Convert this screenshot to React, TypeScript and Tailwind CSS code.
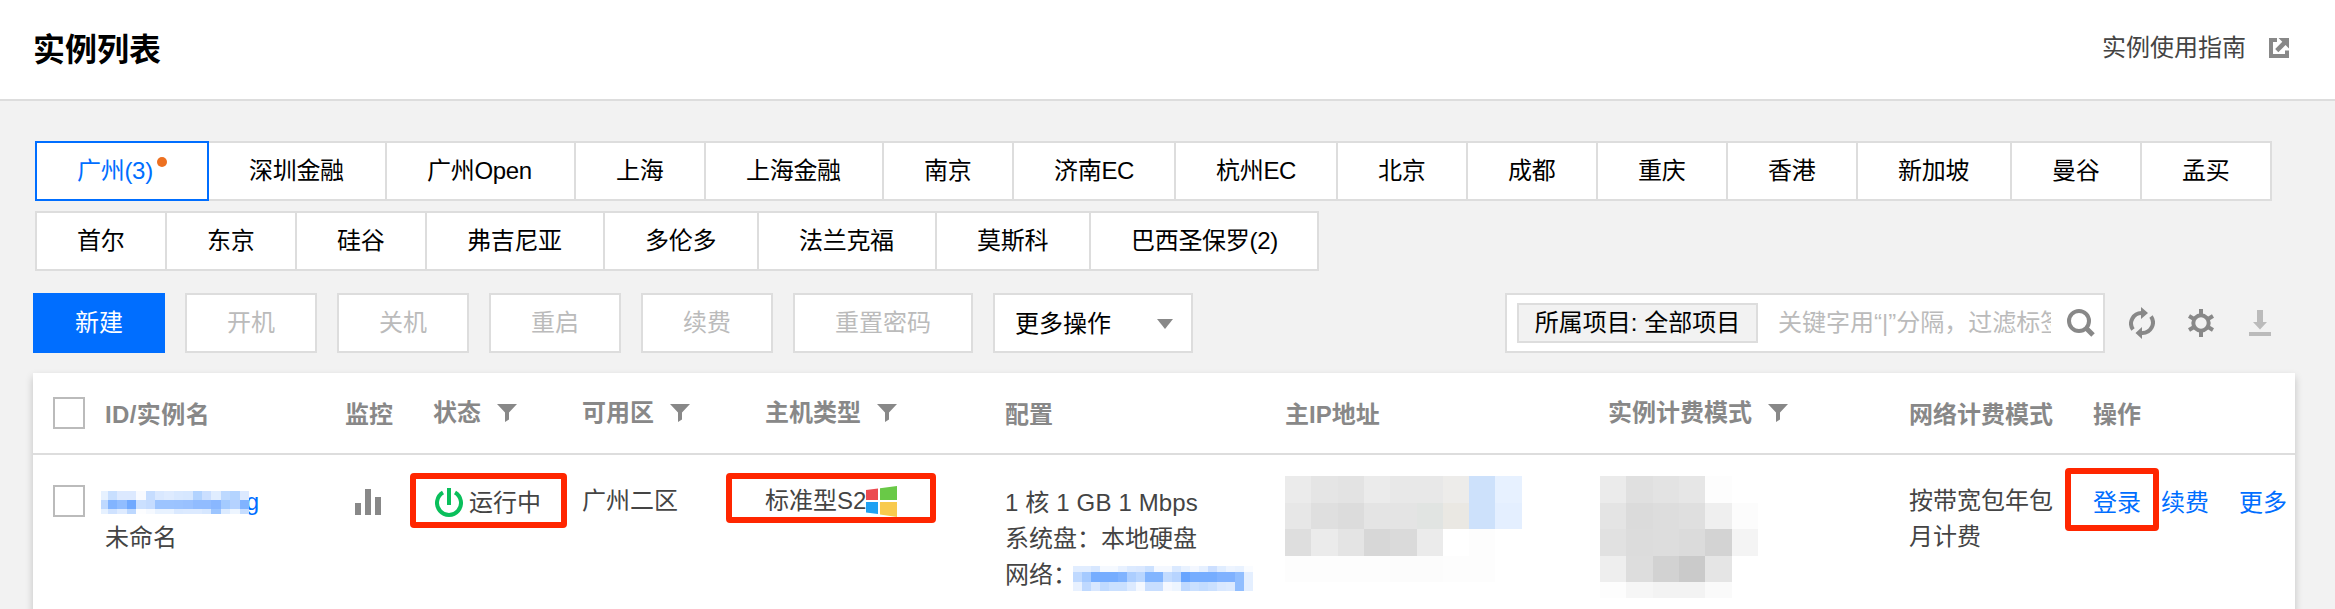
import React from 'react';

type Tab = { label: string; w: string; active?: boolean };

const firstRow: Tab[] = [
  { label: '广州(3)', w: 'w-[174px]', active: true },
  { label: '深圳金融', w: 'w-[180px]' },
  { label: '广州Open', w: 'w-[191px]' },
  { label: '上海', w: 'w-[132px]' },
  { label: '上海金融', w: 'w-[180px]' },
  { label: '南京', w: 'w-[132px]' },
  { label: '济南EC', w: 'w-[164px]' },
  { label: '杭州EC', w: 'w-[164px]' },
  { label: '北京', w: 'w-[132px]' },
  { label: '成都', w: 'w-[132px]' },
  { label: '重庆', w: 'w-[132px]' },
  { label: '香港', w: 'w-[132px]' },
  { label: '新加坡', w: 'w-[156px]' },
  { label: '曼谷', w: 'w-[132px]' },
  { label: '孟买', w: 'w-[132px]' },
];

const secondRow: Tab[] = [
  { label: '首尔', w: 'w-[132px]' },
  { label: '东京', w: 'w-[132px]' },
  { label: '硅谷', w: 'w-[132px]' },
  { label: '弗吉尼亚', w: 'w-[180px]' },
  { label: '多伦多', w: 'w-[156px]' },
  { label: '法兰克福', w: 'w-[180px]' },
  { label: '莫斯科', w: 'w-[156px]' },
  { label: '巴西圣保罗(2)', w: 'w-[230px]' },
];

function Tabs({ items }: { items: Tab[] }) {
  return (
    <div className="flex pl-0.5">
      {items.map((t) => (
        <div
          key={t.label}
          className={`relative -mr-0.5 flex h-[60px] shrink-0 items-center border-2 pl-10 tracking-[-0.3px] whitespace-nowrap ${t.w} ${
            t.active ? 'z-10 border-[#006eff] bg-white text-[#006eff]' : 'border-[#ddd] bg-white text-black'
          }`}
        >
          {t.label}
          {t.active && <span className="absolute top-[14px] right-[40px] h-[10px] w-[10px] rounded-full bg-[#ed7020]" />}
        </div>
      ))}
    </div>
  );
}

function Disabled({ label, w = 'w-[132px]' }: { label: string; w?: string }) {
  return (
    <div className={`flex h-[60px] items-center justify-center border-2 border-[#ddd] bg-white text-[#bbb] ${w}`}>
      {label}
    </div>
  );
}

function Filter() {
  return (
    <svg width="20" height="18" viewBox="0 0 20 18" className="ml-4">
      <path d="M0 0H20L12 8.5V15.5L8 18V8.5Z" fill="#888" />
    </svg>
  );
}

function Head({ label, filter }: { label: string; filter?: boolean }) {
  return (
    <div className={`flex h-9 items-center font-bold whitespace-nowrap text-[#888] ${filter ? 'mt-[22px]' : 'mt-6'}`}>
      {label}
      {filter && <Filter />}
    </div>
  );
}

function Checkbox({ className }: { className: string }) {
  return <div className={`h-8 w-8 border-2 border-[#bbb] bg-white ${className}`} />;
}

function Mosaic({ x, y, colors }: { x: number[]; y: number[]; colors: string[][] }) {
  return (
    <svg width={x[x.length - 1]} height={y[y.length - 1]} shapeRendering="crispEdges" className="block">
      {colors.map((row, r) =>
        row.map((c, i) => (
          <rect key={`${r}-${i}`} x={x[i]} y={y[r]} width={x[i + 1] - x[i]} height={y[r + 1] - y[r]} fill={c} />
        )),
      )}
    </svg>
  );
}

const steps = (start: number, size: number, n: number) => Array.from({ length: n + 1 }, (_, i) => start + size * i);

const idColors = [
  ['#e6f1ff', '#c8dfff', '#dce9ff', '#dce9ff', '#f8faff', '#c6ddff', '#d9e8ff', '#deebff', '#d8e8ff', '#d6e7ff', '#b2d3ff', '#cbdfff', '#e0edff', '#bdd9ff', '#b4d4ff', '#dce9ff'],
  ['#bfd9ff', '#82b4ff', '#91bdff', '#70a9ff', '#cbe0ff', '#c5dcff', '#9cc4ff', '#9cc4ff', '#9bc3ff', '#99c1ff', '#91bcff', '#91bcff', '#89b7ff', '#a4cbff', '#b5d2ff', '#80b3ff'],
  ['#e6f1ff', '#cfe2ff', '#deebff', '#bdd8ff', '#fcfdff', '#f5f9ff', '#e8f2ff', '#e8f2ff', '#dae9ff', '#dceaff', '#dceaff', '#d6e7ff', '#9cc5ff', '#dcebff', '#edf5ff', '#c6ddff'],
];

const netColors = [
  ['#e1edff', '#e1edff', '#d7e7ff', '#f5f9ff', '#f5f9ff', '#e8f1ff', '#dceaff', '#dae8ff', '#cce1ff', '#f4f8ff', '#f4f8ff', '#dae9ff', '#e9f2ff', '#f3f7ff', '#e6f0ff', '#ccdfff', '#e0edff', '#edf4ff', '#e9f2ff', '#fafcff'],
  ['#bfd9ff', '#a5caff', '#76adff', '#76adff', '#76adff', '#80b3ff', '#acceff', '#b9d6ff', '#82b5ff', '#82b5ff', '#c2dbff', '#b7d4ff', '#68a5ff', '#76adff', '#76adff', '#76adff', '#80b2ff', '#80b2ff', '#91beff', '#e4efff'],
  ['#e8f1ff', '#bfd9ff', '#d8e7ff', '#c0daff', '#cae0ff', '#cae0ff', '#dceaff', '#f4f8ff', '#c8deff', '#c8deff', '#f5f8ff', '#edf5ff', '#bfd9ff', '#cae0ff', '#c3dcff', '#cae0ff', '#d9e8ff', '#dceaff', '#91beff', '#e4efff'],
];

const ipColors = [
  ['#ebebeb', '#e5e5e5', '#e3e3e3', '#ebebeb', '#e8e8e8', '#e8e8e8', '#edecea', '#cde1fb', '#e7f1ff'],
  ['#e7e7e7', '#dfdfdf', '#dcdcdc', '#e4e4e4', '#e4e4e4', '#e1e4e2', '#eae8e3', '#cde1fb', '#e4efff'],
  ['#dedede', '#ebebeb', '#e4e4e4', '#d7d7d7', '#dadada', '#ebebeb', '#ffffff', '#fdfdfd', '#ffffff'],
  ['#fdfdfd', '#fdfdfd', '#fdfdfd', '#fdfdfd', '#fcfcfc', '#fcfcfc', '#fdfdfd', '#fdfdfd', '#ffffff'],
];

const feeColors = [
  ['#ebebeb', '#e0e0e0', '#e3e3e3', '#e6e6e6', '#fdfdfd', '#ffffff'],
  ['#e4e4e4', '#dbdbdb', '#dddddd', '#dfdfdf', '#efefef', '#fcfcfc'],
  ['#e1e1e1', '#dcdcdc', '#dddddd', '#dbdbdb', '#d3d3d3', '#f4f4f4'],
  ['#eeeeee', '#dddddd', '#d2d2d2', '#cacaca', '#e5e5e5', '#ffffff'],
  ['#fdfdfd', '#f6f6f6', '#f3f3f3', '#f3f3f3', '#fafafa', '#ffffff'],
];

function RedBox({ className }: { className: string }) {
  return <div className={`pointer-events-none absolute rounded-[4px] border-[6px] border-[#ff2600] ${className}`} />;
}

const columns = 'grid grid-cols-[52px_240px_88px_149px_183px_240px_280px_323px_301px_184px_202px] pl-5';

export default function App() {
  return (
    <div className="h-[609px] w-[2335px] overflow-hidden bg-[#f2f2f2] font-['Liberation_Sans','Noto_Sans_CJK_SC',sans-serif] text-[24px] leading-9 text-[#444]">
      <header className="flex h-[101px] items-center justify-between border-b-2 border-[#ddd] bg-white pr-[46px] pl-[33px]">
        <h1 className="text-[32px] font-bold text-black">实例列表</h1>
        <div className="flex items-center pb-[3px]">
          <span>实例使用指南</span>
          <svg width="20" height="20" viewBox="0 0 20 20" className="ml-[23px]">
            <path d="M8 0H0V20H20V12.5H16V16H4V4H8Z" fill="#888" />
            <path d="M9.5 0H20V10.5L16.6 7.1L9.3 14.2L6.2 11.1L13.3 3.8Z" fill="#888" />
          </svg>
        </div>
      </header>

      <main className="pt-10 pr-10 pl-[33px]">
        <div className="flex flex-col gap-[10px]">
          <Tabs items={firstRow} />
          <Tabs items={secondRow} />
        </div>

        <div className="mt-[22px] flex h-[60px] items-center justify-between">
          <div className="flex gap-5">
            <div className="flex h-[60px] w-[132px] items-center justify-center bg-[#006eff] text-white">新建</div>
            <Disabled label="开机" />
            <Disabled label="关机" />
            <Disabled label="重启" />
            <Disabled label="续费" />
            <Disabled label="重置密码" w="w-[180px]" />
            <div className="flex h-[60px] w-[200px] items-center justify-between border-2 border-[#ddd] bg-white pt-0.5 pr-[18px] pl-5 text-black">
              更多操作
              <svg width="16" height="10" viewBox="0 0 16 10">
                <path d="M0 0H16L8 10Z" fill="#888" />
              </svg>
            </div>
          </div>

          <div className="flex items-center pr-6">
            <div className="flex h-[60px] w-[600px] items-center border-2 border-[#ddd] bg-white pl-[10px]">
              <div className="flex h-10 w-[241px] shrink-0 items-center justify-center border-2 border-[#ddd] bg-[#f2f2f2] whitespace-nowrap text-black">
                所属项目: 全部项目
              </div>
              <div className="ml-5 w-[273px] shrink-0 overflow-hidden whitespace-nowrap text-[#bbb]">
                关键字用“|”分隔，过滤标签
              </div>
              <svg width="28" height="28" viewBox="0 0 28 28" fill="none" stroke="#888" className="ml-4">
                <circle cx="12" cy="12" r="10" strokeWidth="4" />
                <path d="M19 19L26 26" strokeWidth="5" />
              </svg>
            </div>
            <svg width="26" height="32" viewBox="0 0 26 32" fill="none" stroke="#888" strokeWidth="4" className="ml-6">
              <path d="M4 22.500A10.5 10.5 0 0 1 13 6" />
              <path d="M22 9.5A10.5 10.5 0 0 1 13 26" />
              <path d="M12 0L19 6L12 12ZM13 20V32L6.500 26Z" fill="#888" stroke="none" />
            </svg>
            <svg width="26" height="28" viewBox="0 0 26 28" fill="none" stroke="#888" strokeWidth="4" className="ml-[33px]">
              <circle cx="13" cy="14" r="7.700" />
              <path d="M13 0V6M13 22V28M1 7L6 10M20 18L25 21M25 7L20 10M6 18L1 21" />
            </svg>
            <svg width="22" height="26" viewBox="0 0 22 26" fill="#bbb" className="ml-[35px]">
              <path d="M8 0H14V12H18L11 19.500L4 12H8ZM0 22H22V26H0Z" />
            </svg>
          </div>
        </div>

        <section className="mt-5 h-[250px] bg-white shadow-[0_4px_8px_rgba(0,0,0,0.2)]">
          <div className={`${columns} h-[82px] border-b-2 border-[#ddd]`}>
            <Checkbox className="mt-6" />
            <div className="tracking-[0.4px]">
              <Head label="ID/实例名" />
            </div>
            <Head label="监控" />
            <Head label="状态" filter />
            <Head label="可用区" filter />
            <Head label="主机类型" filter />
            <Head label="配置" />
            <Head label="主IP地址" />
            <Head label="实例计费模式" filter />
            <Head label="网络计费模式" />
            <Head label="操作" />
          </div>

          <div className={`${columns} h-[168px]`}>
            <Checkbox className="mt-[30px]" />

            <div className="pt-[29px]">
              <div className="relative h-9 text-[#006eff]">
                <span className="flex w-[154px] justify-end">g</span>
                <div className="absolute top-[7px] -left-1">
                  <Mosaic x={[0, ...steps(7, 9.4, 15)]} y={[0, 9, 18, 23]} colors={idColors} />
                </div>
              </div>
              <div>未命名</div>
            </div>

            <svg width="26" height="26" viewBox="0 0 26 26" fill="#888" className="mt-[34px] ml-[10px]">
              <path d="M0 14H6V26H0ZM10 0H16V26H10ZM20 8H26V26H20Z" />
            </svg>

            <div className="relative mt-[30px] flex h-9 items-center self-start pl-0.5">
              <svg width="28" height="30" viewBox="0 0 28 30" fill="none" stroke="#0abf5b" strokeWidth="4">
                <path d="M8 4.500A12 12 0 1 0 20 4.500" />
                <path d="M14 0V17" />
              </svg>
              <span className="ml-1.5">运行中</span>
              <RedBox className="-top-3 -left-[23px] h-[55px] w-[157px]" />
            </div>

            <div className="pt-7">广州二区</div>

            <div className="relative mt-7 flex h-9 items-center">
              <span>标准型S2</span>
              <svg width="31" height="31" viewBox="0 0 31 31">
                <path d="M0 4L12 2.500V14H0Z" fill="#ec4a50" />
                <path d="M14 2.200L31 0V14H14Z" fill="#69c947" />
                <path d="M0 16H12V28L0 26.500Z" fill="#1ea1f3" />
                <path d="M14 16H31V31L14 28.500Z" fill="#f8ca4d" />
              </svg>
              <RedBox className="-top-[10px] -left-[39px] h-[50px] w-[210px]" />
            </div>

            <div className="pt-[30px] whitespace-nowrap">
              <div className="tracking-[0.15px]">1 核 1 GB 1 Mbps</div>
              <div>系统盘：本地硬盘</div>
              <div className="flex">
                网络：
                <div className="-ml-1 pt-[9px]">
                  <Mosaic x={steps(0, 9, 20)} y={[0, 6, 16, 25]} colors={netColors} />
                </div>
              </div>
            </div>

            <div className="pt-[21px]">
              <Mosaic x={steps(0, 26.3, 9)} y={[0, 27, 53, 80, 106]} colors={ipColors} />
            </div>

            <div className="-ml-2 pt-[21px]">
              <Mosaic x={steps(0, 26.3, 6)} y={[0, 27, 53, 80, 106, 122]} colors={feeColors} />
            </div>

            <div className="w-[146px] pt-7">按带宽包年包月计费</div>

            <div className="relative mt-[30px] flex h-9 whitespace-nowrap text-[#006eff]">
              <span>登录</span>
              <span className="ml-5">续费</span>
              <span className="ml-[30px]">更多</span>
              <RedBox className="-top-[17px] -left-[28px] h-[63px] w-[94px]" />
            </div>
          </div>
        </section>
      </main>
    </div>
  );
}
